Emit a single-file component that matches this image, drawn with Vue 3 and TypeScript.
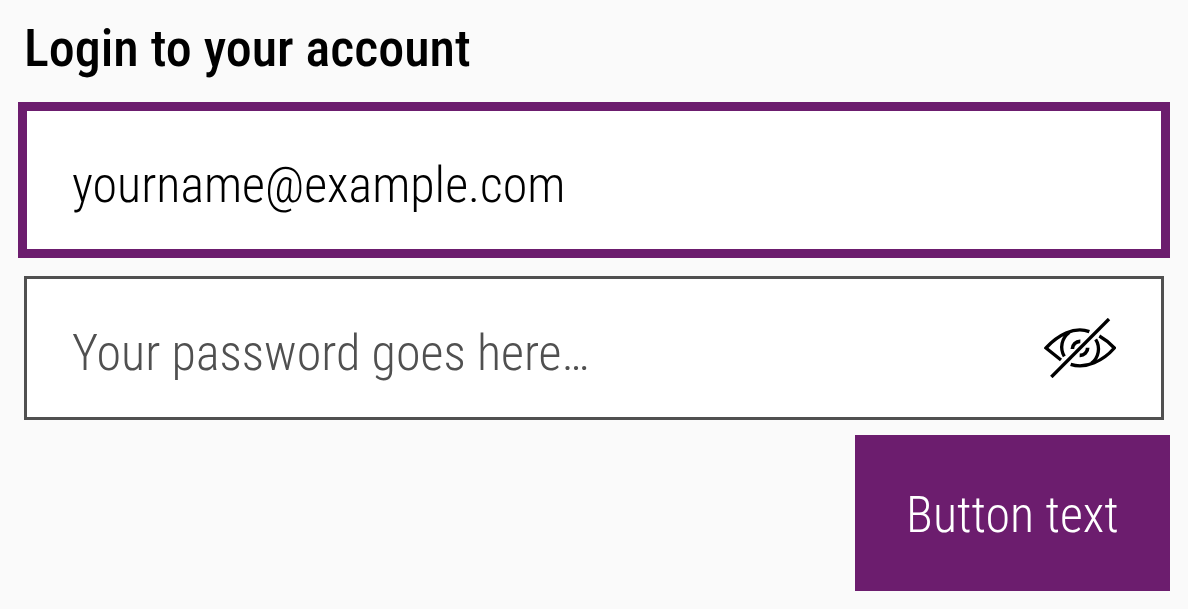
<script setup lang="ts">
import { ref } from 'vue'

const email = ref('yourname@example.com')
const password = ref('')
const visible = ref(false)
</script>

<template>
  <form class="login" @submit.prevent>
    <h1 class="title">Login to your account</h1>
    <div class="field field-active">
      <input v-model="email" class="input" type="email" aria-label="Email address" />
    </div>
    <div class="field">
      <input
        v-model="password"
        class="input"
        :type="visible ? 'text' : 'password'"
        placeholder="Your password goes here…"
        aria-label="Password"
      />
      <button class="toggle" type="button" aria-label="Show password" @click="visible = !visible">
        <svg class="eye" viewBox="42 54 216 180" fill="none" stroke="#000" stroke-width="10" aria-hidden="true">
          <path d="M93 180 48 144C81 108 132 77 178 95" />
          <path d="M208 108C226 118 240 130 253 144C221 181 168 209 122 193" />
          <path d="M118 97A54 54 0 0 0 103 169" />
          <path d="M197 118A54 54 0 0 1 184 190" />
          <path d="M127 147A23 23 0 0 1 151 124" stroke-width="11" />
          <path d="M173 143A23 23 0 0 1 149 166" stroke-width="11" />
          <path d="M64 231 237 57" />
        </svg>
      </button>
    </div>
    <button class="submit" type="submit">Button text</button>
  </form>
</template>

<style>
body {
  background: #fafafa;
}
</style>

<style scoped>
.login {
  display: flex;
  flex-direction: column;
  padding: 18px 24px;
  font-family: "Roboto Condensed", Roboto, "Liberation Sans", sans-serif;
  font-size: 50px;
  font-weight: 300;
}
.title {
  margin: 0 0 28px;
  font-size: 52px;
  line-height: 62px;
  font-weight: 500;
  color: #000;
}
.field {
  display: flex;
  align-items: center;
  box-sizing: border-box;
  height: 144px;
  margin-bottom: 24px;
  padding: 0 45px;
  border: 3px solid #505050;
  background: #fff;
}
.field-active {
  border-color: #6c1d6e;
  box-shadow: 0 0 0 6px #6c1d6e;
}
.input {
  flex: 1;
  min-width: 0;
  padding: 10px 0 0;
  border: 0;
  outline: 0;
  background: transparent;
  font: inherit;
  color: #000;
}
.input::placeholder {
  color: #505050;
  opacity: 1;
}
.toggle {
  display: flex;
  padding: 0;
  border: 0;
  background: none;
  cursor: pointer;
}
.eye {
  width: 72px;
  height: 60px;
}
.submit {
  align-self: flex-end;
  min-width: 315px;
  height: 156px;
  margin: -9px -6px 0 0;
  padding: 4px 45px 0;
  border: 0;
  background: #6c1d6e;
  font: inherit;
  color: #fff;
  cursor: pointer;
}
</style>
